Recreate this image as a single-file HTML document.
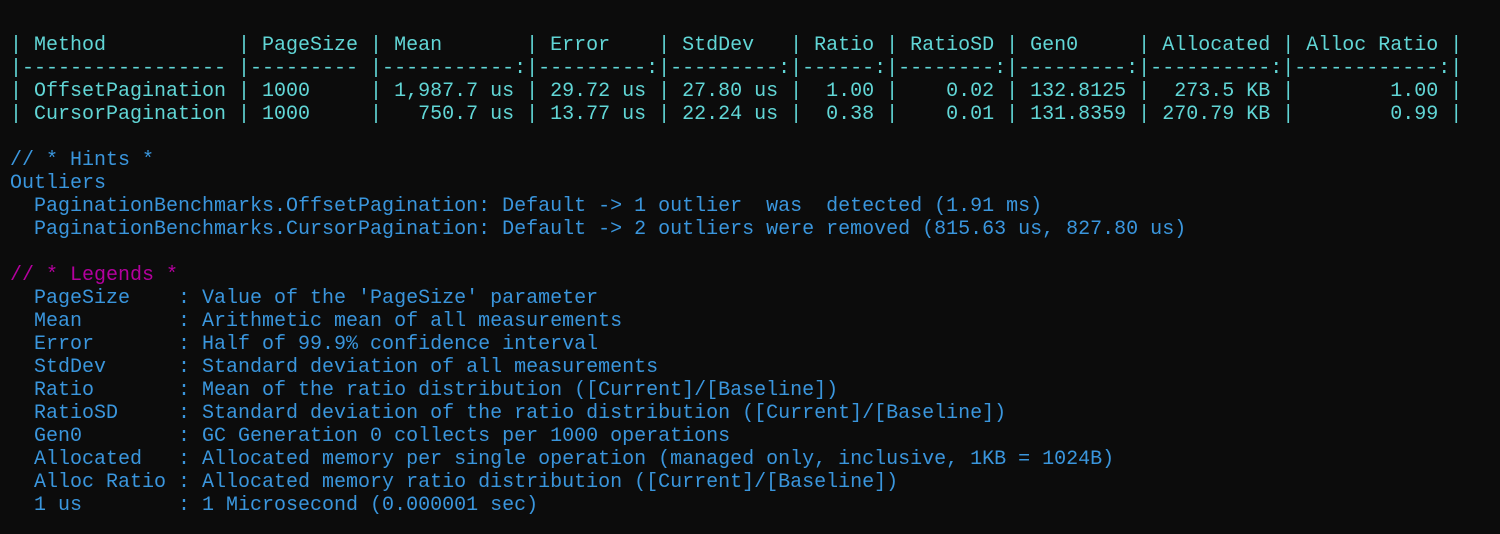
<!DOCTYPE html>
<html><head><meta charset="utf-8"><style>
html,body{margin:0;background:#0c0c0c;width:1500px;height:534px;overflow:hidden}
pre{margin:0;padding:11px 0 0 10px;font-family:"Liberation Mono","DejaVu Sans Mono",monospace;font-size:20px;line-height:23px;color:#3a96dd;white-space:pre}
.t{color:#61d6d6}.m{color:#b4009e}
</style></head><body><pre>

<span class="t">| Method           | PageSize | Mean       | Error    | StdDev   | Ratio | RatioSD | Gen0     | Allocated | Alloc Ratio |
|----------------- |--------- |-----------:|---------:|---------:|------:|--------:|---------:|----------:|------------:|
| OffsetPagination | 1000     | 1,987.7 us | 29.72 us | 27.80 us |  1.00 |    0.02 | 132.8125 |  273.5 KB |        1.00 |
| CursorPagination | 1000     |   750.7 us | 13.77 us | 22.24 us |  0.38 |    0.01 | 131.8359 | 270.79 KB |        0.99 |</span>

// * Hints *
Outliers
  PaginationBenchmarks.OffsetPagination: Default -&gt; 1 outlier  was  detected (1.91 ms)
  PaginationBenchmarks.CursorPagination: Default -&gt; 2 outliers were removed (815.63 us, 827.80 us)

<span class="m">// * Legends *</span>
  PageSize    : Value of the 'PageSize' parameter
  Mean        : Arithmetic mean of all measurements
  Error       : Half of 99.9% confidence interval
  StdDev      : Standard deviation of all measurements
  Ratio       : Mean of the ratio distribution ([Current]/[Baseline])
  RatioSD     : Standard deviation of the ratio distribution ([Current]/[Baseline])
  Gen0        : GC Generation 0 collects per 1000 operations
  Allocated   : Allocated memory per single operation (managed only, inclusive, 1KB = 1024B)
  Alloc Ratio : Allocated memory ratio distribution ([Current]/[Baseline])
  1 us        : 1 Microsecond (0.000001 sec)
</pre></body></html>
